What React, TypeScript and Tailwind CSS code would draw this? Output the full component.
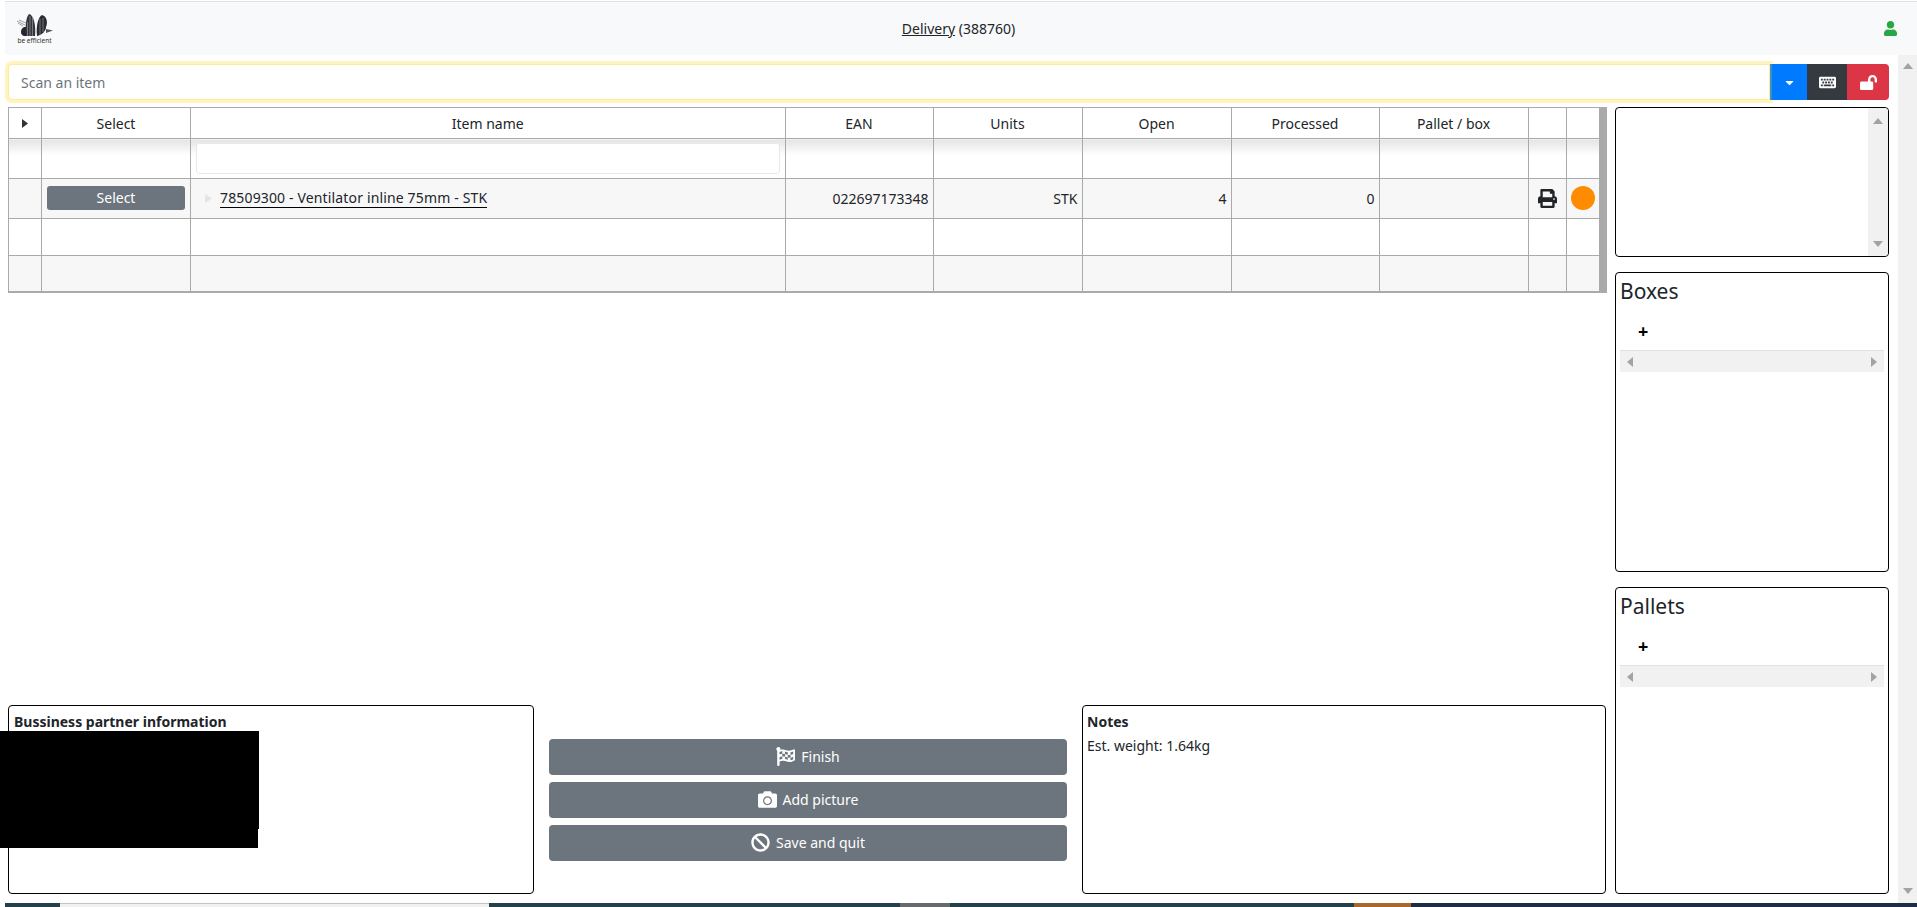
import React from "react";
import { FaBan, FaCamera, FaCaretDown, FaFlagCheckered, FaKeyboard, FaLockOpen, FaPrint, FaUser } from "react-icons/fa";

function Logo() {
  return (
    <div className="flex w-[37px] flex-col items-center">
      <svg width="37" height="23" viewBox="0 0 37 23" className="blur-[0.4px]">
        <path d="M1 7 L9 11 M3 6 L10 9 M2 9 L7 12" stroke="#8a8a8a" strokeWidth="0.8" fill="none" />
        <path d="M8 13 C4 15 4 21 8 22 L13 22 L13 13 Z" fill="#26262c" />
        <path d="M10 22 C9 12 10 3 13 0 C18 1 20 12 19 22 Z" fill="#34343c" />
        <path d="M21 22 C20 12 22 3 26 1 C31 2 32 9 30 13 C30 17 26 21 21 22 Z" fill="#2a2a30" />
        <path d="M30 15 L37 16.5 L30 19 Z" fill="#555" />
        <path d="M11.5 8 V22 M14 2 V22 M16.5 3 V22 M24 5 V21 M27 4 V18" stroke="#8c8c98" strokeWidth="0.8" />
      </svg>
      <span className="mt-[1px] text-[6.5px] leading-[6px] text-[#333]">be efficient</span>
    </div>
  );
}

function Arrow({ dir, className = "" }: { dir: "up" | "down" | "left" | "right"; className?: string }) {
  const points = {
    up: "0,6 5,0 10,6",
    down: "0,0 5,6 10,0",
    left: "6,0 0,5 6,10",
    right: "0,0 6,5 0,10",
  }[dir];
  const vertical = dir === "up" || dir === "down";
  return (
    <svg
      width={vertical ? 10 : 6}
      height={vertical ? 6 : 10}
      viewBox={vertical ? "0 0 10 6" : "0 0 6 10"}
      className={className}
    >
      <polygon points={points} fill="#a3a3a3" />
    </svg>
  );
}

function Panel({ title }: { title: string }) {
  return (
    <div className="flex h-full flex-col rounded-[4px] border border-black px-[4px] pt-[2px]">
      <h4 className="text-[21px] leading-[32px] text-[#212529]">{title}</h4>
      <div className="flex h-[43px] items-center pl-[18px] pt-[5px]">
        <span className="text-[18px] font-bold leading-none text-black">+</span>
      </div>
      <div className="flex h-[22px] items-center justify-between border-t border-[#dee2e6] bg-[#f1f1f1] px-[7px]">
        <Arrow dir="left" />
        <Arrow dir="right" />
      </div>
    </div>
  );
}

const widths = ["w-[33px]", "w-[149px]", "", "w-[148px]", "w-[149px]", "w-[149px]", "w-[148px]", "w-[149px]", "w-[38px]", "w-[37px]"];
const headers = ["", "Select", "Item name", "EAN", "Units", "Open", "Processed", "Pallet / box", "", ""];
const cell = "border border-[#aaaaaa] p-0";
const filterCell = "border border-[#aaaaaa] bg-[linear-gradient(#e4e4e4,#ffffff_16px)] p-0";

function ItemTable() {
  return (
    <table className="w-[1599px] table-fixed border-collapse border-b-2 border-r-[8px] border-[#aaaaaa] text-[#212529]">
      <colgroup>
        {widths.map((w, i) => (
          <col key={i} className={w} />
        ))}
      </colgroup>
      <thead>
        <tr className="h-[31px]">
          {headers.map((h, i) => (
            <th key={i} className={`${cell} text-center font-normal`}>
              {i === 0 ? (
                <svg width="6" height="9" viewBox="0 0 6 9" className="mx-auto">
                  <polygon points="0,0 6,4.5 0,9" fill="#333333" />
                </svg>
              ) : (
                h
              )}
            </th>
          ))}
        </tr>
      </thead>
      <tbody>
        <tr className="h-[40px]">
          {headers.map((_, i) => (
            <td key={i} className={filterCell}>
              {i === 2 && (
                <input className="mx-auto block h-[31px] w-[584px] rounded-[3px] border border-[#e9e9e9] bg-white" />
              )}
            </td>
          ))}
        </tr>
        <tr className="h-[40px] bg-[#f7f7f7]">
          <td className={cell}></td>
          <td className={cell}>
            <button className="mx-auto mb-[2px] block h-[24px] w-[138px] rounded-[3px] bg-[#6c757d] text-center leading-[24px] text-white">
              Select
            </button>
          </td>
          <td className={cell}>
            <div className="flex items-center pl-[14px]">
              <svg width="7" height="9" viewBox="0 0 7 9" className="mr-[8px]">
                <polygon points="0,0 7,4.5 0,9" fill="#e4e4e4" />
              </svg>
              <a className="border-b border-black leading-[18px] tracking-[0.15px]">78509300 - Ventilator inline 75mm - STK</a>
            </div>
          </td>
          <td className={`${cell} pr-[4px] text-right`}>022697173348</td>
          <td className={`${cell} pr-[4px] text-right`}>STK</td>
          <td className={`${cell} pr-[4px] text-right`}>4</td>
          <td className={`${cell} pr-[4px] text-right`}>0</td>
          <td className={cell}></td>
          <td className={cell}>
            <FaPrint className="mx-auto text-[19px] text-[#212529]" />
          </td>
          <td className={cell}>
            <div className="mx-auto mb-[1px] h-[24px] w-[24px] rounded-full bg-[#ff8c00]" />
          </td>
        </tr>
        <tr className="h-[37px]">
          {headers.map((_, i) => (
            <td key={i} className={cell}></td>
          ))}
        </tr>
        <tr className="h-[36px] bg-[#f7f7f7]">
          {headers.map((_, i) => (
            <td key={i} className={cell}></td>
          ))}
        </tr>
      </tbody>
    </table>
  );
}

function ActionButton({ icon, label }: { icon: React.ReactNode; label: string }) {
  return (
    <button className="flex h-[36px] items-center justify-center gap-[6px] rounded-[4px] bg-[#6c757d] text-white">
      {icon}
      <span>{label}</span>
    </button>
  );
}

export default function App() {
  return (
    <div className="relative flex h-[907px] w-[1917px] flex-col overflow-hidden bg-white font-['Noto_Sans',sans-serif] text-[14px] leading-[21px] text-[#212529]">
      <div className="ml-[5px] mt-[1px] flex h-[54px] shrink-0 items-center justify-between border-t border-[#dee2e6] bg-[#f8f9fa] pl-[11px] pr-[19px]">
        <Logo />
        <div className="absolute left-0 right-0 text-center">
          <a className="underline">Delivery</a> (388760)
        </div>
        <FaUser className="text-[15px] text-[#28a745]" />
      </div>

      <div className="flex min-h-0 flex-1">
        <main className="flex min-w-0 flex-1 flex-col pb-[9px] pl-[8px] pr-[9px] pt-[9px]">
          <div className="flex h-[36px] shrink-0">
            <div className="relative z-10 flex h-[36px] flex-1 items-center rounded-l-[4px] border border-[#ffec99] bg-white pl-[12px] text-[#6c757d] shadow-[0_0_0_3px_#fff3c0]">
              Scan an item
            </div>
            <button className="relative z-20 flex w-[37px] items-center justify-center border-l-2 border-[#3d8ec9] bg-[#007bff] text-white">
              <FaCaretDown className="text-[13px]" />
            </button>
            <button className="flex w-[40px] items-center justify-center bg-[#343a40] text-white">
              <FaKeyboard className="text-[17px]" />
            </button>
            <button className="flex w-[42px] items-center justify-center rounded-r-[4px] bg-[#dc3545] text-white">
              <FaLockOpen className="text-[17px]" />
            </button>
          </div>

          <div className="mt-[7px] flex min-h-0 flex-1 gap-[8px]">
            <div className="flex w-[1599px] flex-col justify-between">
              <ItemTable />
              <div className="grid h-[189px] grid-cols-[526px_518px_524px] gap-[15px]">
                <div className="rounded-[4px] border border-black px-[5px] pt-[5px]">
                  <b className="font-bold">Bussiness partner information</b>
                </div>
                <div className="flex flex-col justify-center gap-[7px]">
                  <ActionButton icon={<FaFlagCheckered className="text-[19px]" />} label="Finish" />
                  <ActionButton icon={<FaCamera className="text-[19px]" />} label="Add picture" />
                  <ActionButton icon={<FaBan className="text-[19px]" />} label="Save and quit" />
                </div>
                <div className="rounded-[4px] border border-black pl-[4px] pt-[5px]">
                  <b className="block font-bold">Notes</b>
                  <div className="mt-[3px]">Est. weight: 1.64kg</div>
                </div>
              </div>
            </div>

            <aside className="flex w-[274px] flex-col gap-[15px]">
              <div className="flex h-[150px] shrink-0 justify-end rounded-[4px] border border-black">
                <div className="flex w-[20px] flex-col items-center justify-between rounded-r-[4px] bg-[#f1f1f1] pb-[9px] pt-[10px]">
                  <Arrow dir="up" />
                  <Arrow dir="down" />
                </div>
              </div>
              <div className="h-[300px] shrink-0">
                <Panel title="Boxes" />
              </div>
              <div className="min-h-0 flex-1">
                <Panel title="Pallets" />
              </div>
            </aside>
          </div>
        </main>

        <div className="flex w-[19px] shrink-0 flex-col items-center justify-between bg-[#f1f1f1] pb-[9px] pt-[8px]">
          <Arrow dir="up" />
          <Arrow dir="down" />
        </div>
      </div>

      <div className="ml-[5px] flex h-[4px] shrink-0">
        <div className="w-[55px] bg-[#24404a]" />
        <div className="w-[429px] border-t border-[#c4c4c4] bg-[#f1f1f1]" />
        <div className="w-[411px] bg-[#24404a]" />
        <div className="w-[50px] bg-[#666a6e]" />
        <div className="w-[404px] bg-[#24404a]" />
        <div className="w-[57px] bg-[#a9682a]" />
        <div className="flex-1 bg-[#1e2d45]" />
      </div>

      <div className="absolute left-0 top-[731px] h-[98px] w-[259px] bg-black" />
      <div className="absolute left-0 top-[829px] h-[19px] w-[258px] bg-black" />
    </div>
  );
}
